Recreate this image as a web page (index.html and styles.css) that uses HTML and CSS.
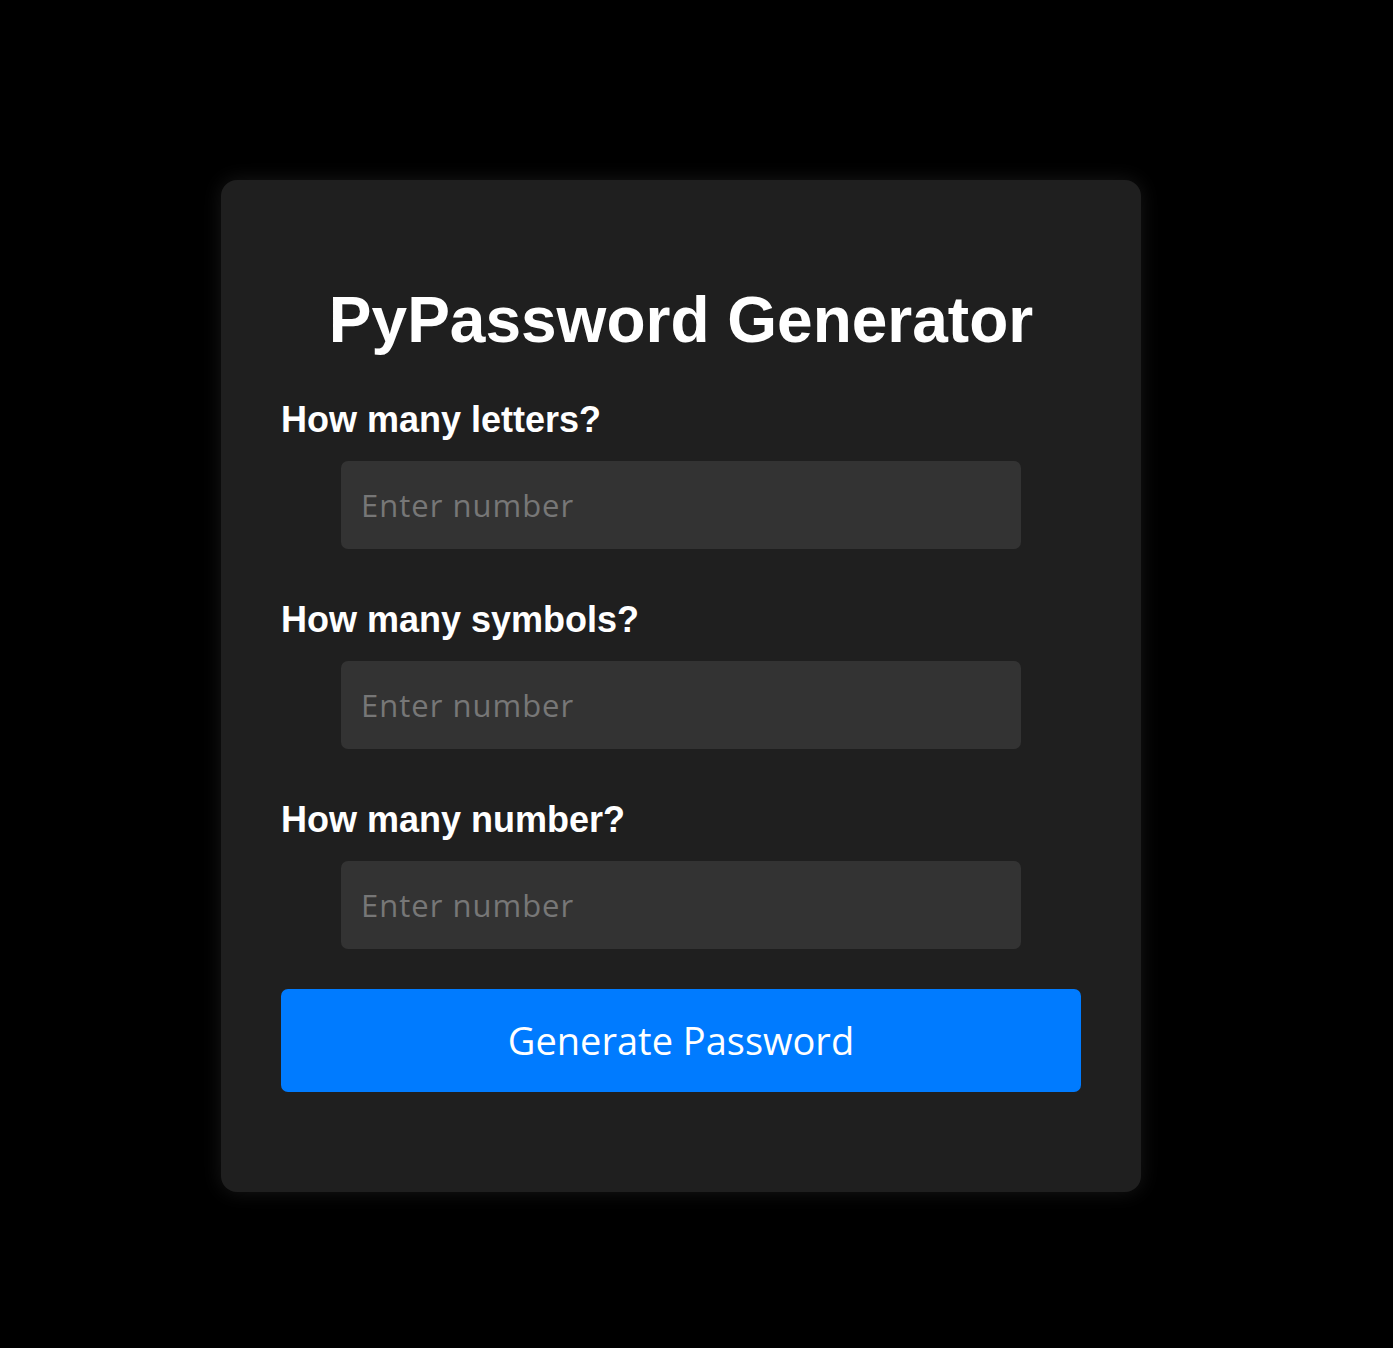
FILE: index.html
```html
<!DOCTYPE html>
<html lang="en">
<head>
<meta charset="utf-8">
<title>PyPassword Generator</title>
<link rel="stylesheet" href="styles.css">
</head>
<body>
<div class="page">
  <form class="card">
    <h1 class="title">PyPassword Generator</h1>
    <label class="label first" for="letters">How many letters?</label>
    <input class="field" id="letters" type="number" placeholder="Enter number">
    <label class="label" for="symbols">How many symbols?</label>
    <input class="field" id="symbols" type="number" placeholder="Enter number">
    <label class="label" for="numbers">How many number?</label>
    <input class="field" id="numbers" type="number" placeholder="Enter number">
    <button class="btn" type="button">Generate Password</button>
  </form>
</div>
</body>
</html>
```
FILE: styles.css
```css
html, body {
  margin: 0;
  padding: 0;
  background: #000;
}

.page {
  padding: 180px 0 0 221px;
  min-height: 1348px;
  box-sizing: border-box;
}

.card {
  width: 920px;
  box-sizing: border-box;
  padding: 60px;
  background: #1f1f1f;
  border-radius: 16px;
  box-shadow: 0 0 20px rgba(255, 255, 255, 0.09);
  display: flex;
  flex-direction: column;
  font-family: "Liberation Sans", Arial, sans-serif;
  color: #fff;
}

.title {
  margin: 48px 0 0;
  font-size: 64px;
  line-height: 64px;
  font-weight: 700;
  text-align: center;
}

.label {
  display: block;
  margin-top: 53px;
  font-size: 36px;
  line-height: 36px;
  font-weight: 700;
}

.label.first {
  margin-top: 50px;
}

.field {
  display: block;
  box-sizing: border-box;
  width: 680px;
  height: 88px;
  margin: 23px auto 0;
  padding: 0 20px;
  border: none;
  border-radius: 7px;
  background: #333;
  color: #fff;
  font-family: "Open Sans", sans-serif;
  font-size: 31px;
  letter-spacing: 1px;
  outline: none;
  -moz-appearance: textfield;
}

.field::-webkit-outer-spin-button,
.field::-webkit-inner-spin-button {
  -webkit-appearance: none;
  margin: 0;
}

.field::placeholder {
  color: #777;
  opacity: 1;
}

.btn {
  margin: 40px 0;
  width: 100%;
  height: 103px;
  padding: 0 0 2px;
  border: none;
  border-radius: 7px;
  background: #007bff;
  color: #fff;
  font-family: "Open Sans", sans-serif;
  font-size: 38px;
  cursor: pointer;
}
```
